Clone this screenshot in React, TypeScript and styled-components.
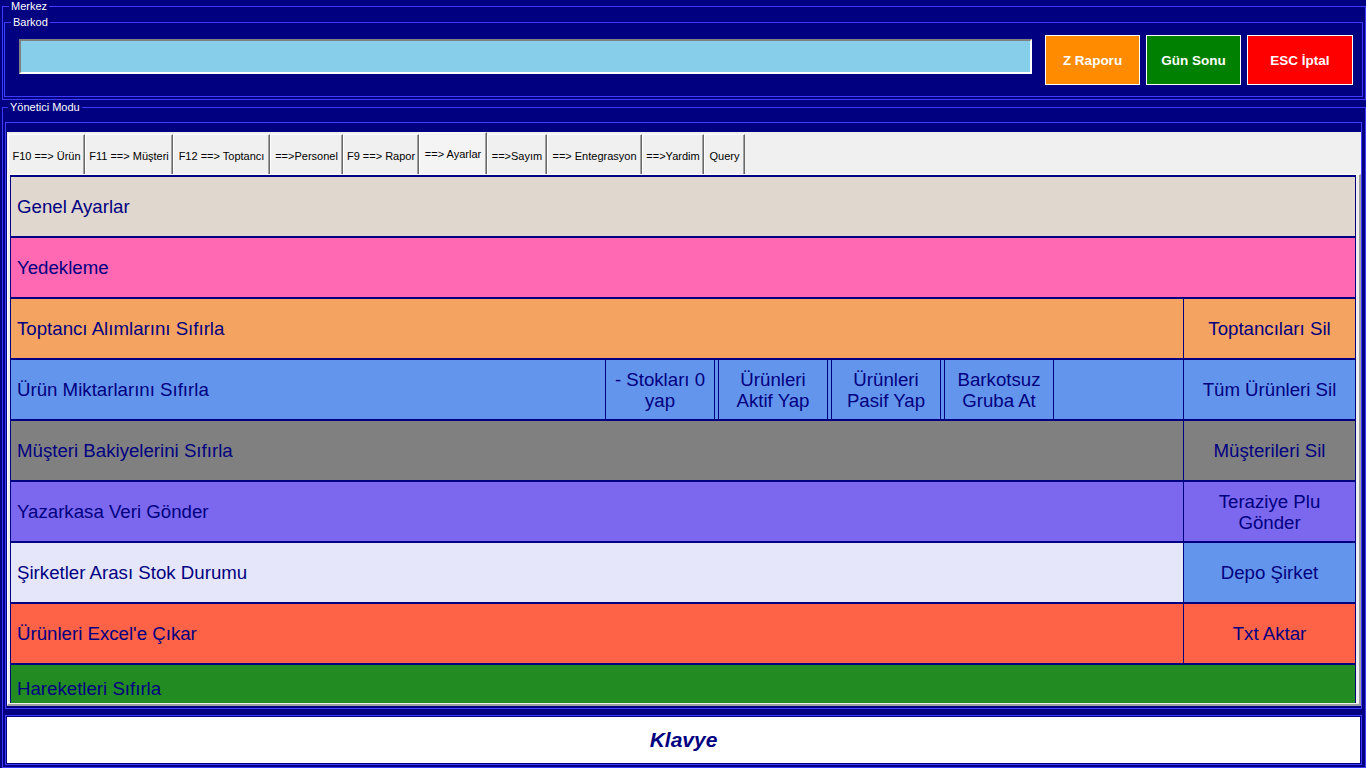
import styled, { createGlobalStyle } from "styled-components"

const NAVY = "#000080"
const LINE = "#3c3cff"

const GlobalStyle = createGlobalStyle`
    html, body {
        margin: 0;
        padding: 0;
        background: ${NAVY};
    }
    body {
        width: 1366px;
        height: 768px;
        overflow: hidden;
        font-family: "Liberation Sans", Arial, sans-serif;
    }
`

type RowData = {
    label: string
    color: string
    side?: string
    sideColor?: string
    height?: number
    tools?: string[]
}

const tabs = [
    { label: "F10 ==> Ürün", width: 77 },
    { label: "F11 ==> Müşteri", width: 88 },
    { label: "F12 ==> Toptancı", width: 97 },
    { label: "==>Personel", width: 73 },
    { label: "F9 ==> Rapor", width: 76 },
    { label: "==> Ayarlar", width: 68, active: true },
    { label: "==>Sayım", width: 60 },
    { label: "==> Entegrasyon", width: 95 },
    { label: "==>Yardim", width: 62 },
    { label: "Query", width: 41 },
]

const rows: RowData[] = [
    { label: "Genel Ayarlar", color: "#E0D8CF" },
    { label: "Yedekleme", color: "#FF69B4" },
    { label: "Toptancı Alımlarını Sıfırla", color: "#F4A460", side: "Toptancıları Sil" },
    {
        label: "Ürün Miktarlarını Sıfırla",
        color: "#6495ED",
        side: "Tüm Ürünleri Sil",
        tools: ["- Stokları 0 yap", "Ürünleri Aktif Yap", "Ürünleri Pasif Yap", "Barkotsuz Gruba At"],
    },
    { label: "Müşteri Bakiyelerini Sıfırla", color: "#808080", side: "Müşterileri Sil" },
    { label: "Yazarkasa Veri Gönder", color: "#7B68EE", side: "Teraziye Plu Gönder" },
    { label: "Şirketler Arası Stok Durumu", color: "#E6E6FA", side: "Depo Şirket", sideColor: "#6495ED" },
    { label: "Ürünleri Excel'e Çıkar", color: "#FF6347", side: "Txt Aktar" },
    { label: "Hareketleri Sıfırla", color: "#228B22", height: 50 },
]

export default function App(){
    return(
        <Screen>
            <GlobalStyle/>
            <Merkez>
                <Legend $offset={5}>Merkez</Legend>
                <Barkod>
                    <Legend $offset={6}>Barkod</Legend>
                    <BarcodeRow>
                        <BarcodeInput defaultValue=""/>
                        <ActionButton $bg="#FF8C00" $width={95}>Z Raporu</ActionButton>
                        <ActionButton $bg="#008000" $width={95}>Gün Sonu</ActionButton>
                        <ActionButton $bg="#FF0000" $width={106}>ESC İptal</ActionButton>
                    </BarcodeRow>
                </Barkod>
            </Merkez>
            <Yonetici>
                <Legend $offset={3}>Yönetici Modu</Legend>
                <Panel>
                    <TabControl>
                        <TabStrip>
                            {tabs.map(tab => (
                                <Tab key={tab.label} $width={tab.width} $active={!!tab.active}>{tab.label}</Tab>
                            ))}
                        </TabStrip>
                        <TabPage>
                            <RowViewport>
                                {rows.map(row => (
                                    <Row key={row.label} $bg={row.color} $height={row.height ?? 61}>
                                        <RowLabel>{row.label}</RowLabel>
                                        {row.tools ?
                                            <ToolGroup>
                                                {row.tools.map(tool => <ToolButton key={tool}>{tool}</ToolButton>)}
                                            </ToolGroup>
                                            : <></>
                                        }
                                        {row.side ?
                                            <SideButton $bg={row.sideColor}>{row.side}</SideButton>
                                            : <></>
                                        }
                                    </Row>
                                ))}
                            </RowViewport>
                        </TabPage>
                    </TabControl>
                </Panel>
                <KeyboardFrame>
                    <KeyboardButton>Klavye</KeyboardButton>
                </KeyboardFrame>
            </Yonetici>
        </Screen>
    )
}

const Screen = styled.div`
    display: flex;
    flex-direction: column;
    width: 1366px;
    height: 768px;
    background: ${NAVY};
`
const Group = styled.fieldset`
    margin: 0;
    min-inline-size: 0;
    border: 1px solid ${LINE};
    box-sizing: border-box;
`
const Legend = styled.legend<{ $offset: number }>`
    margin-left: ${p => p.$offset}px;
    padding: 0 2px;
    color: #ffffff;
    font-size: 11px;
    line-height: 13px;
`
const Merkez = styled(Group)`
    width: 1364px;
    margin-left: 2px;
    padding: 3px 2px 2px 1px;
`
const Barkod = styled(Group)`
    padding: 0;
`
const BarcodeRow = styled.div`
    display: flex;
    align-items: flex-start;
    gap: 6px;
    padding: 6px 9px 11px 14px;
`
const BarcodeInput = styled.input`
    flex: 1;
    height: 35px;
    margin: 4px 7px 0 0;
    box-sizing: border-box;
    background: #87CEEB;
    border-style: solid;
    border-width: 2px;
    border-color: #808080 #ffffff #ffffff #808080;
    outline: none;
    font-size: 16px;
`
const ActionButton = styled.button<{ $bg: string; $width: number }>`
    width: ${p => p.$width}px;
    height: 50px;
    background: ${p => p.$bg};
    border: 1px solid #ffffff;
    color: #ffffff;
    font-family: "Liberation Sans", Arial, sans-serif;
    font-weight: bold;
    font-size: 13.5px;
    padding: 0;
`
const Yonetici = styled(Group)`
    width: 1364px;
    margin: 1px 0 0 2px;
    padding: 8px 3px 1px 2px;
    flex: 1;
`
const Panel = styled.div`
    border: 1px solid ${LINE};
    padding: 9px 0 2px 1px;
`
const TabControl = styled.div`
    display: flex;
    flex-direction: column;
    height: 574px;
    background: #f0f0f0;
`
const TabStrip = styled.div`
    display: flex;
    align-items: flex-end;
    height: 42px;
    padding-left: 1px;
`
const Tab = styled.div<{ $width: number; $active: boolean }>`
    display: flex;
    align-items: center;
    justify-content: center;
    box-sizing: border-box;
    width: ${p => p.$width}px;
    height: ${p => p.$active ? 42 : 40}px;
    padding-top: ${p => p.$active ? 0 : 2}px;
    background: ${p => p.$active ? "#f4f4f4" : "#f0f0f0"};
    border-top: 1px solid #ffffff;
    border-left: 1px solid #ffffff;
    border-right: 1px solid #696969;
    box-shadow: inset -1px 0 #a0a0a0;
    color: #000000;
    font-size: 11px;
    white-space: nowrap;
`
const TabPage = styled.div`
    flex: 1;
    display: flex;
    flex-direction: column;
    border-top: 1px solid #ffffff;
    border-left: 1px solid #ffffff;
    border-right: 2px solid #a0a0a0;
    border-bottom: 2px solid #a0a0a0;
    padding: 0 3px 1px 2px;
`
const RowViewport = styled.div`
    height: 528px;
    overflow: hidden;
    border-top: 1px solid ${NAVY};
    box-sizing: border-box;
`
const Row = styled.div<{ $bg: string; $height: number }>`
    display: flex;
    height: ${p => p.$height}px;
    box-sizing: border-box;
    border: 1px solid ${NAVY};
    background: ${p => p.$bg};
    color: ${NAVY};
    font-size: 18.67px;
`
const RowLabel = styled.div`
    flex: 1;
    display: flex;
    align-items: center;
    padding-left: 6px;
`
const ToolGroup = styled.div`
    display: flex;
    gap: 3px;
    width: 578px;
`
const ToolButton = styled.div`
    display: flex;
    align-items: center;
    justify-content: center;
    width: 110px;
    box-sizing: border-box;
    padding: 0 4px;
    border-left: 1px solid ${NAVY};
    border-right: 1px solid ${NAVY};
    text-align: center;
    line-height: 21px;
`
const SideButton = styled.div<{ $bg?: string }>`
    display: flex;
    align-items: center;
    justify-content: center;
    width: 172px;
    box-sizing: border-box;
    padding: 0 6px;
    border-left: 1px solid ${NAVY};
    background: ${p => p.$bg ?? "transparent"};
    text-align: center;
    line-height: 21px;
`
const KeyboardFrame = styled.div`
    margin-top: 6px;
    border: 1px solid ${LINE};
    padding: 1px;
`
const KeyboardButton = styled.div`
    display: flex;
    align-items: center;
    justify-content: center;
    height: 46px;
    background: #ffffff;
    color: ${NAVY};
    font-size: 21px;
    font-weight: bold;
    font-style: italic;
`
